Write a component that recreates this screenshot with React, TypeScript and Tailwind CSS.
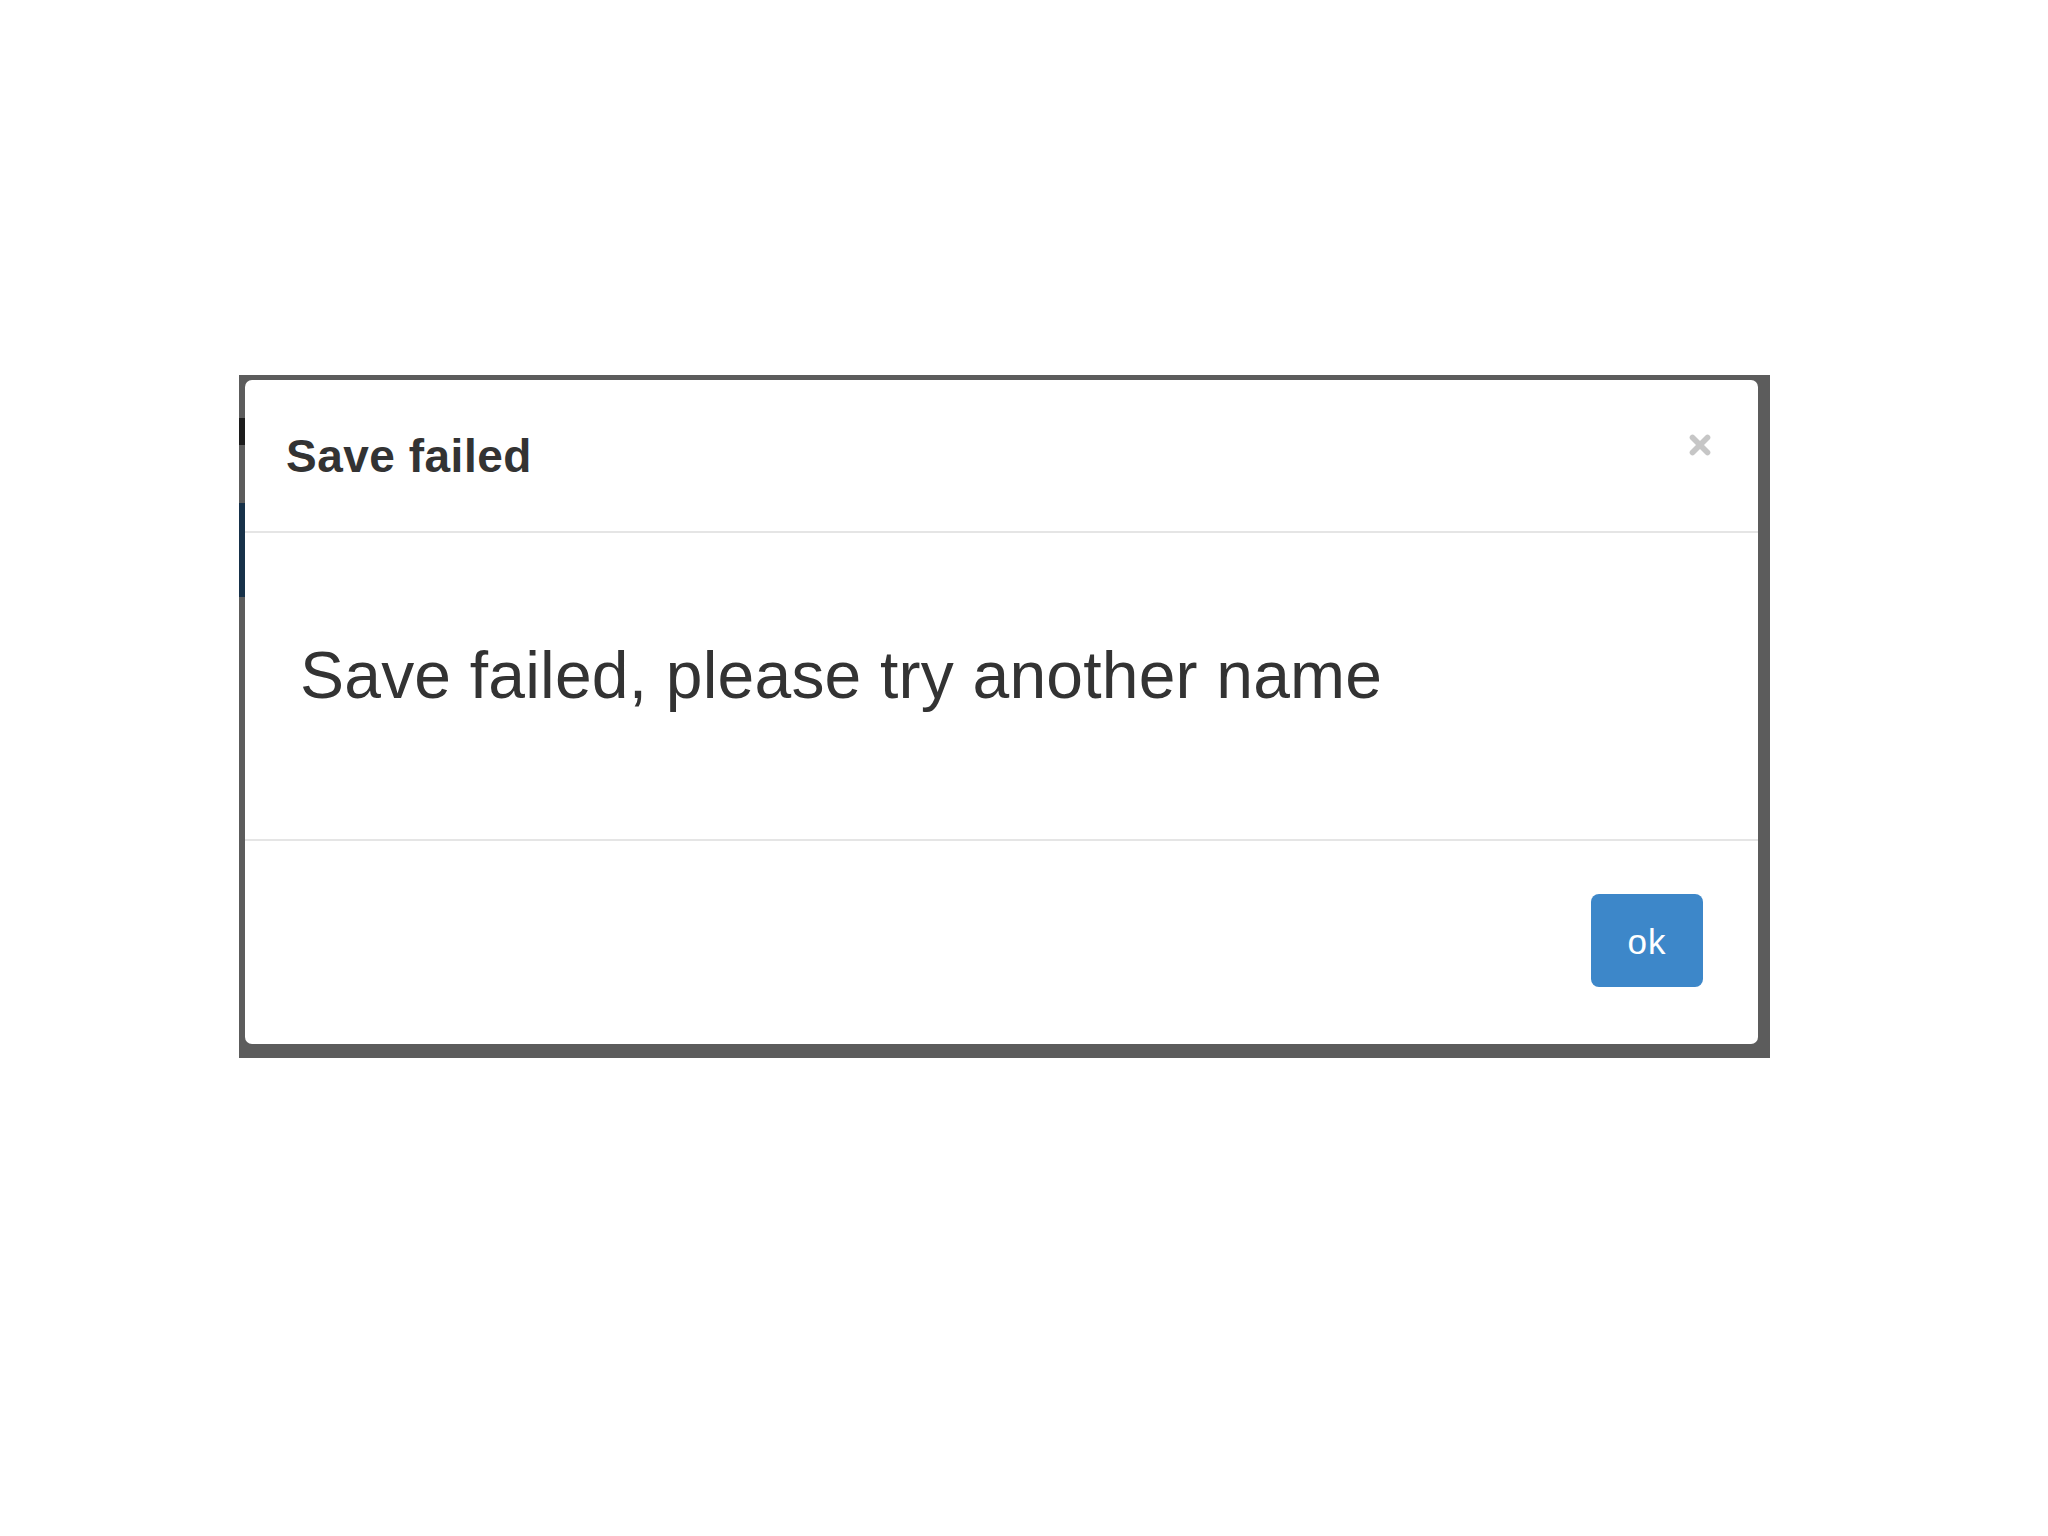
import { X } from 'lucide-react';

const font = { fontFamily: '"Liberation Sans", Arial, sans-serif' };

export default function App() {
  return (
    <div className="min-h-[1536px] w-[2048px] bg-white pl-[239px] pt-[375px]" style={font}>
      <div className="flex w-[1531px] bg-[#5c5c5c]">
        {/* left edge: bits of the page behind the backdrop */}
        <div className="flex w-[6px] flex-col">
          <div className="h-[43px] bg-[#5c5c5c]" />
          <div className="h-[27px] bg-[#1c1c1c]" />
          <div className="h-[58px] bg-[#5c5c5c]" />
          <div className="h-[94px] bg-[#173149]" />
          <div className="flex-1 bg-[#5c5c5c]" />
        </div>

        <div className="flex-1 pb-[14px] pr-[12px] pt-[5px]">
          <div className="flex h-[664px] flex-col rounded-[7px] bg-white text-[#333]">
            <div className="flex h-[153px] items-start justify-between border-b-2 border-[#e5e5e5] pl-[41px] pr-[43px] pt-[53px]">
              <h4 className="text-[46px] font-bold leading-[46px] tracking-[0.5px]">Save failed</h4>
              <button className="mt-[-3px] text-[#c6c6c6]">
                <X size={30} strokeWidth={4.5} />
              </button>
            </div>

            <div className="h-[308px] border-b-2 border-[#e5e5e5] pl-[55px] pt-[109px]">
              <p className="text-[66px] leading-[66px] tracking-[0.2px]">Save failed, please try another name</p>
            </div>

            <div className="flex flex-1 items-start justify-end pr-[55px] pt-[53px]">
              <button className="flex h-[93px] w-[112px] items-center justify-center rounded-[8px] bg-[#3d87c9] pt-[3px] text-[35px] font-light tracking-[1px] text-white">
                ok
              </button>
            </div>
          </div>
        </div>
      </div>
    </div>
  );
}
